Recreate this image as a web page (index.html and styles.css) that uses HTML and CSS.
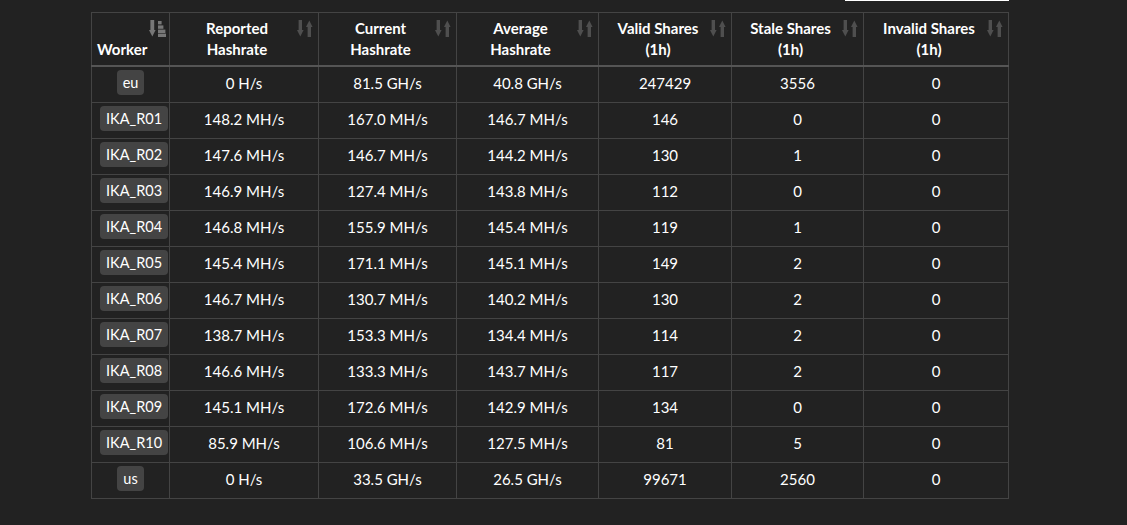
FILE: index.html
```html
<!DOCTYPE html>
<html lang="en">
<head>
  <meta charset="UTF-8" />
  <title>Workers</title>
  <link rel="stylesheet" href="styles.css">
</head>
<body>
  <div class="page">
    <div class="toolbar">
      <div class="search"></div>
    </div>

    <table class="workers">
      <colgroup>
        <col style="width: 78px">
        <col style="width: 149px">
        <col style="width: 138px">
        <col style="width: 142px">
        <col style="width: 133px">
        <col style="width: 132px">
        <col style="width: 145px">
      </colgroup>
      <thead>
        <tr>
          <th class="worker-col sorted">Worker
            <svg class="sort-icon" viewBox="0 0 17 17"><rect x="1.4" y="0" width="3.8" height="11"/><polygon points="0,10 6.6,10 3.3,16.5"/><rect x="9" y="1" width="3.6" height="3.4"/><rect x="9" y="5.4" width="5.4" height="3.4"/><rect x="9" y="9.6" width="7.4" height="3.4"/><rect x="9" y="13.6" width="8" height="3.4"/></svg>
          </th>
          <th>Reported<br>Hashrate<svg class="sort-icon" viewBox="0 0 16 17"><rect x="1.6" y="0" width="3.4" height="11"/><polygon points="0,10 6.6,10 3.3,16.5"/><polygon points="9,7 15.6,7 12.3,0.5"/><rect x="10.6" y="6" width="3.4" height="11"/></svg></th>
          <th>Current<br>Hashrate<svg class="sort-icon" viewBox="0 0 16 17"><rect x="1.6" y="0" width="3.4" height="11"/><polygon points="0,10 6.6,10 3.3,16.5"/><polygon points="9,7 15.6,7 12.3,0.5"/><rect x="10.6" y="6" width="3.4" height="11"/></svg></th>
          <th>Average<br>Hashrate<svg class="sort-icon" viewBox="0 0 16 17"><rect x="1.6" y="0" width="3.4" height="11"/><polygon points="0,10 6.6,10 3.3,16.5"/><polygon points="9,7 15.6,7 12.3,0.5"/><rect x="10.6" y="6" width="3.4" height="11"/></svg></th>
          <th>Valid Shares<br>(1h)<svg class="sort-icon" viewBox="0 0 16 17"><rect x="1.6" y="0" width="3.4" height="11"/><polygon points="0,10 6.6,10 3.3,16.5"/><polygon points="9,7 15.6,7 12.3,0.5"/><rect x="10.6" y="6" width="3.4" height="11"/></svg></th>
          <th>Stale Shares<br>(1h)<svg class="sort-icon" viewBox="0 0 16 17"><rect x="1.6" y="0" width="3.4" height="11"/><polygon points="0,10 6.6,10 3.3,16.5"/><polygon points="9,7 15.6,7 12.3,0.5"/><rect x="10.6" y="6" width="3.4" height="11"/></svg></th>
          <th>Invalid Shares<br>(1h)<svg class="sort-icon" viewBox="0 0 16 17"><rect x="1.6" y="0" width="3.4" height="11"/><polygon points="0,10 6.6,10 3.3,16.5"/><polygon points="9,7 15.6,7 12.3,0.5"/><rect x="10.6" y="6" width="3.4" height="11"/></svg></th>
        </tr>
      </thead>
      <tbody>
        <tr><td><span class="badge">eu</span></td><td>0 H/s</td><td>81.5 GH/s</td><td>40.8 GH/s</td><td>247429</td><td>3556</td><td>0</td></tr>
        <tr><td><span class="badge">IKA_R01</span></td><td>148.2 MH/s</td><td>167.0 MH/s</td><td>146.7 MH/s</td><td>146</td><td>0</td><td>0</td></tr>
        <tr><td><span class="badge">IKA_R02</span></td><td>147.6 MH/s</td><td>146.7 MH/s</td><td>144.2 MH/s</td><td>130</td><td>1</td><td>0</td></tr>
        <tr><td><span class="badge">IKA_R03</span></td><td>146.9 MH/s</td><td>127.4 MH/s</td><td>143.8 MH/s</td><td>112</td><td>0</td><td>0</td></tr>
        <tr><td><span class="badge">IKA_R04</span></td><td>146.8 MH/s</td><td>155.9 MH/s</td><td>145.4 MH/s</td><td>119</td><td>1</td><td>0</td></tr>
        <tr><td><span class="badge">IKA_R05</span></td><td>145.4 MH/s</td><td>171.1 MH/s</td><td>145.1 MH/s</td><td>149</td><td>2</td><td>0</td></tr>
        <tr><td><span class="badge">IKA_R06</span></td><td>146.7 MH/s</td><td>130.7 MH/s</td><td>140.2 MH/s</td><td>130</td><td>2</td><td>0</td></tr>
        <tr><td><span class="badge">IKA_R07</span></td><td>138.7 MH/s</td><td>153.3 MH/s</td><td>134.4 MH/s</td><td>114</td><td>2</td><td>0</td></tr>
        <tr><td><span class="badge">IKA_R08</span></td><td>146.6 MH/s</td><td>133.3 MH/s</td><td>143.7 MH/s</td><td>117</td><td>2</td><td>0</td></tr>
        <tr><td><span class="badge">IKA_R09</span></td><td>145.1 MH/s</td><td>172.6 MH/s</td><td>142.9 MH/s</td><td>134</td><td>0</td><td>0</td></tr>
        <tr><td><span class="badge">IKA_R10</span></td><td>85.9 MH/s</td><td>106.6 MH/s</td><td>127.5 MH/s</td><td>81</td><td>5</td><td>0</td></tr>
        <tr><td><span class="badge">us</span></td><td>0 H/s</td><td>33.5 GH/s</td><td>26.5 GH/s</td><td>99671</td><td>2560</td><td>0</td></tr>
      </tbody>
    </table>
  </div>
</body>
</html>
```

FILE: styles.css
```css
body {
  margin: 0;
  background: #222;
  color: #fff;
  font-family: Lato, 'Open Sans', sans-serif;
  font-size: 15px;
}

.page {
  width: 918px;
  padding-left: 91px;
}

.toolbar {
  display: flex;
  justify-content: flex-end;
  height: 12px;
}

.search {
  width: 164px;
  height: 1px;
  background: #fff;
}

.workers {
  width: 918px;
  table-layout: fixed;
  border-collapse: collapse;
  border: 1px solid #444;
}

.workers th,
.workers td {
  border: 1px solid #444;
  text-align: center;
}

.workers th {
  position: relative;
  padding: 5px 24px 5px 10px;
  line-height: 21px;
  font-weight: bold;
  vertical-align: bottom;
  border-bottom: 2px solid #555;
}

.workers th.worker-col {
  text-align: left;
  padding-left: 5px;
}

.sort-icon {
  position: absolute;
  top: 7px;
  right: 5px;
  width: 16px;
  height: 17px;
  fill: #4f4f4f;
}

.worker-col .sort-icon {
  right: 3px;
  width: 17px;
  fill: #777;
}

.workers td {
  height: 36px;
  padding: 0 8px 3px;
  box-sizing: border-box;
  vertical-align: middle;
  line-height: 20px;
}

.badge {
  display: inline-block;
  height: 25px;
  line-height: 25px;
  padding: 0 6px;
  border-radius: 4px;
  background: #444;
  font-size: 14.5px;
  vertical-align: middle;
}
```
